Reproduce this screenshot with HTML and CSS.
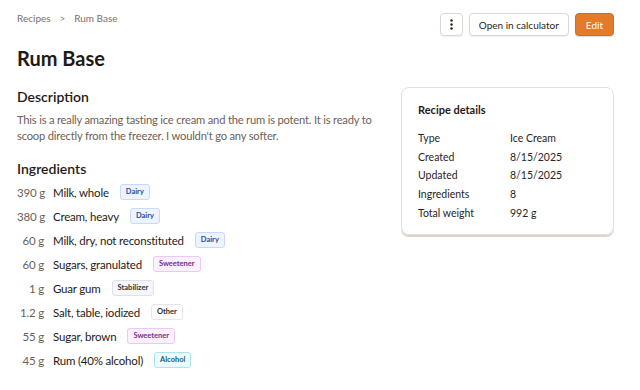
FILE: index.html
```html
<!DOCTYPE html>
<html>
<head>
<meta charset="utf-8">
<link rel="stylesheet" href="styles.css">
</head>
<body>
<div class="page">
  <div class="topbar">
    <nav class="crumbs"><span>Recipes</span><span class="sep">&gt;</span><span>Rum Base</span></nav>
    <div class="actions">
      <button class="btn icon-btn" aria-label="More">
        <svg width="3" height="11" viewBox="0 0 3 11"><circle cx="1.5" cy="1.5" r="1.25" fill="#2a2522"/><circle cx="1.5" cy="5.5" r="1.25" fill="#2a2522"/><circle cx="1.5" cy="9.5" r="1.25" fill="#2a2522"/></svg>
      </button>
      <button class="btn">Open in calculator</button>
      <button class="btn primary">Edit</button>
    </div>
  </div>
  <h1 class="title">Rum Base</h1>
  <div class="main">
    <div class="left">
      <h2 class="section-title">Description</h2>
      <p class="desc">This is a really amazing tasting ice cream and the rum is potent. It is ready to scoop directly from the freezer. I wouldn't go any softer.</p>
      <h2 class="section-title ing-title">Ingredients</h2>
      <ul class="ingredients">
        <li><span class="amt">390 g</span><span class="name">Milk, whole</span><span class="tag dairy">Dairy</span></li>
        <li><span class="amt">380 g</span><span class="name">Cream, heavy</span><span class="tag dairy">Dairy</span></li>
        <li><span class="amt">60 g</span><span class="name">Milk, dry, not reconstituted</span><span class="tag dairy">Dairy</span></li>
        <li><span class="amt">60 g</span><span class="name">Sugars, granulated</span><span class="tag sweet">Sweetener</span></li>
        <li><span class="amt">1 g</span><span class="name">Guar gum</span><span class="tag stab">Stabilizer</span></li>
        <li><span class="amt">1.2 g</span><span class="name">Salt, table, iodized</span><span class="tag other">Other</span></li>
        <li><span class="amt">55 g</span><span class="name">Sugar, brown</span><span class="tag sweet">Sweetener</span></li>
        <li><span class="amt">45 g</span><span class="name">Rum (40% alcohol)</span><span class="tag alc">Alcohol</span></li>
      </ul>
    </div>
    <aside class="card">
      <h3 class="card-title">Recipe details</h3>
      <dl class="details">
        <dt>Type</dt><dd>Ice Cream</dd>
        <dt>Created</dt><dd>8/15/2025</dd>
        <dt>Updated</dt><dd>8/15/2025</dd>
        <dt>Ingredients</dt><dd>8</dd>
        <dt>Total weight</dt><dd>992 g</dd>
      </dl>
    </aside>
  </div>
</div>
</body>
</html>
```

FILE: styles.css
```css
* { box-sizing: border-box; }
body {
  margin: 0;
  font-family: Lato, "Noto Sans", sans-serif;
  color: #1f1a17;
  background: #fff;
}
.page { padding: 0 26px 0 17px; }
.topbar {
  display: flex;
  justify-content: space-between;
  align-items: flex-start;
  padding-top: 13px;
  height: 37px;
}
.crumbs {
  display: flex;
  gap: 9px;
  font-size: 10px;
  color: #7c716b;
  line-height: 11px;
}
.crumbs .sep { font-size: 9.5px; }
.actions { display: flex; gap: 6px; }
.btn {
  height: 23px;
  border: 1px solid #ddd6d2;
  background: #fff;
  border-radius: 4px;
  font-family: inherit;
  font-size: 10px;
  color: #2a2522;
  padding: 0 9px;
  box-shadow: 0 1px 1px rgba(0,0,0,0.06);
}
.icon-btn { width: 23px; padding: 0; display: flex; align-items: center; justify-content: center; }
.primary {
  background: #e47b28;
  border-color: #d46e1e;
  color: #fff;
  padding: 0 10px;
  box-shadow: 0 1px 1px rgba(0,0,0,0.15);
}
.title {
  margin: 9px 0 0;
  font-size: 20px;
  font-weight: 700;
  line-height: 24px;
}
.main {
  display: grid;
  grid-template-columns: 1fr 213px;
  gap: 20px;
  margin-top: 17px;
}
.left { padding-top: 1px; }
.section-title {
  margin: 0;
  font-size: 14px;
  font-weight: 600;
  line-height: 18px;
}
.desc {
  margin: 6px 0 0;
  font-size: 11.2px;
  letter-spacing: -0.2px;
  line-height: 16px;
  color: #6e5f57;
}
.ing-title { margin-top: 16px; }
.ingredients {
  list-style: none;
  margin: 2px 0 0;
  padding: 0;
}
.ingredients li {
  display: flex;
  align-items: center;
  height: 24px;
  font-size: 11.5px;
  letter-spacing: -0.2px;
}
.amt {
  width: 27px;
  text-align: right;
  color: #6e5f57;
  margin-right: 9px;
  white-space: nowrap;
}
.name { color: #1f1a17; margin-right: 11px; }
.tag {
  font-size: 7.5px;
  font-weight: 700;
  letter-spacing: 0;
  padding: 2px 5px;
  border-radius: 3px;
  border: 1px solid;
  line-height: 10px;
}
.dairy { background: #eef4ff; border-color: #c7dafc; color: #2d4a9c; }
.sweet { background: #fcf1fe; border-color: #ecc6f4; color: #7b2a8c; }
.stab { background: #f6f7f9; border-color: #dde1e8; color: #2e3338; }
.other { background: #fff; border-color: #e6e6e6; color: #2b2b2b; }
.alc { background: #ecfbfd; border-color: #a8e6f0; color: #175e6f; }
.card {
  align-self: start;
  border: 1px solid #e4dfdb;
  border-radius: 8px;
  box-shadow: 0 2px 0 #ddd4ce;
  padding: 14px 16px 14px;
  height: 148px;
}
.card-title {
  margin: 0;
  font-size: 11px;
  font-weight: 700;
  line-height: 16px;
}
.details {
  display: grid;
  grid-template-columns: 92px 1fr;
  margin: 11px 0 0;
  font-size: 10.5px;
  line-height: 18.7px;
}
.details dt, .details dd { margin: 0; color: #2a2522; }
```
